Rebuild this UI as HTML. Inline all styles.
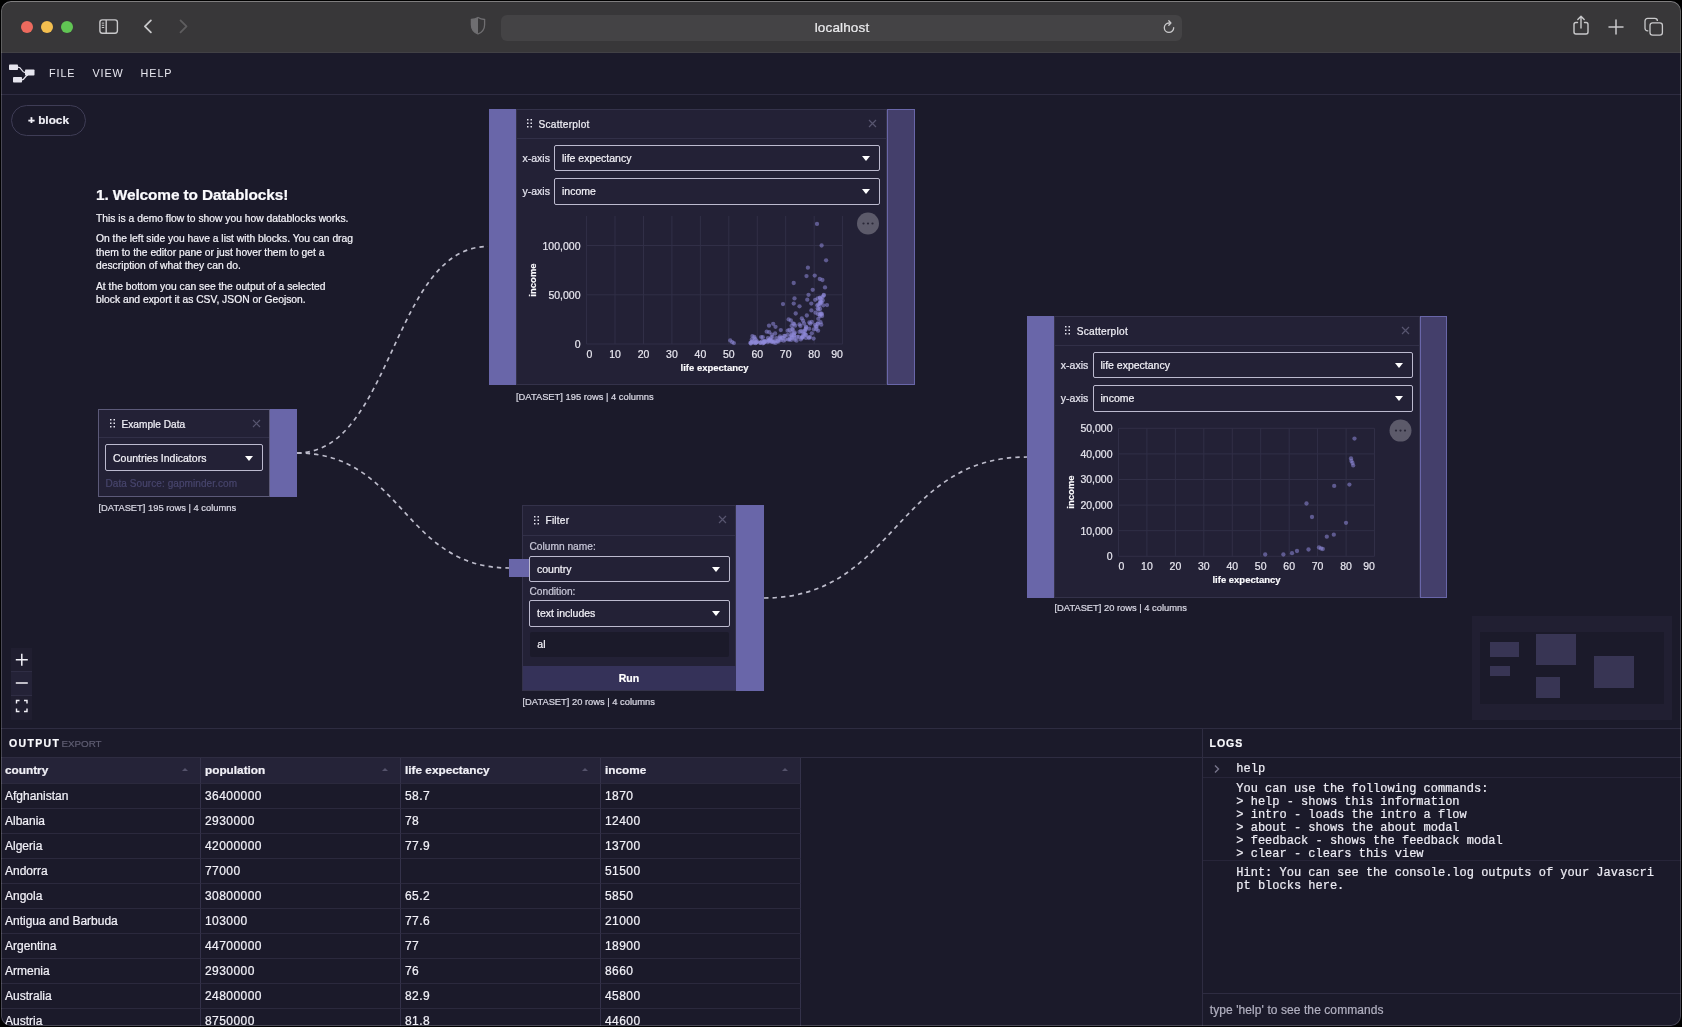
<!DOCTYPE html>
<html lang="en"><head><meta charset="utf-8"><title>Datablocks</title>
<style>
*{box-sizing:border-box;margin:0;padding:0}
html,body{width:1682px;height:1027px;overflow:hidden;background:#000}
body{font-family:"Liberation Sans",sans-serif;color:#fff;position:relative}
.win{position:absolute;left:1px;top:1px;width:1680px;height:1025px;border-radius:10px;overflow:hidden;background:#1b1a2a}
.o{position:absolute;left:-1px;top:-1px;width:1682px;height:1027px;will-change:transform}
.a{position:absolute}
.t{position:absolute;white-space:nowrap;line-height:1;-webkit-text-stroke:.22px}
.sel span,td,th,.mono{-webkit-text-stroke:.22px}
/* titlebar */
.tb{left:1px;top:1px;width:1680px;height:52px;background:#383739;border-bottom:1px solid #424145}
.url{left:501px;top:14.500px;width:680.500px;height:26px;border-radius:6px;background:#444345}
.dot{position:absolute;width:12px;height:12px;border-radius:50%;top:21px}
/* menu */
.mb{left:1px;top:53px;width:1680px;height:42px;border-bottom:1px solid #2e2c41;background:#1b1a2a}
.mi{font-size:10.8px;letter-spacing:.9px;color:#e9e8f0;top:68px}
/* nodes */
.node{position:absolute;background:#232136;border:1px solid #34324a}
.hl{position:absolute;background:#6966a9}
.hr{position:absolute;background:#443f6b;border:1px solid #6966a9}
.hd{position:absolute;left:0;right:0;top:0;height:28px;border-bottom:1px solid #323048}
.ttl{font-size:10.15px;color:#f0eff6}
.sel{position:absolute;border:1px solid #bcbacf;border-radius:2px;background:transparent;height:26px}
.sel span{position:absolute;left:7px;top:7px;font-size:10.5px;line-height:1;color:#f3f2f8;white-space:nowrap}
.sel i{position:absolute;right:9px;top:10px;width:0;height:0;border-left:4.5px solid transparent;border-right:4.5px solid transparent;border-top:5px solid #fff}
.lbl{font-size:10.5px;color:#e4e3ee}
.ds{font-size:9.35px;color:#d9d8e4}
.x{position:absolute;width:9px;height:9px}
.grip{position:absolute;width:5px;height:9px}
/* bottom */
.bp{left:1px;top:728px;width:1680px;height:298px;border-top:1px solid #2e2c41;background:#1b1a2a}
table{border-collapse:separate;border-spacing:0;position:absolute;left:1px;top:758px;font-size:12px;table-layout:fixed}
td,th{width:200px;height:25px;border-right:1px solid #34324a;border-bottom:1px solid #2b293d;text-align:left;padding:0 0 1px 4px;font-weight:normal;color:#f1f0f7;white-space:nowrap;position:relative}
td.n{letter-spacing:.45px}
th{font-weight:bold;font-size:11.8px;background:#252338;height:26px}
th i{position:absolute;right:12px;top:10px;width:0;height:0;border-left:3.5px solid transparent;border-right:3.5px solid transparent;border-bottom:3.5px solid #55536b}
.mono{font-family:"Liberation Mono",monospace;font-size:12px;line-height:13px;color:#ecebf3;white-space:pre;position:absolute}
.p{font-size:10.3px;color:#f3f2f8}
.mm{background:#383554}
.t.mi{-webkit-text-stroke:0}
svg text{stroke:#e8e7f0;stroke-width:.2px}
</style></head><body>
<div class="win"><div class="o">

<!-- TITLEBAR -->
<div class="a tb"></div>
<div class="dot" style="left:21px;background:#ed6a5e"></div>
<div class="dot" style="left:41px;background:#f4bf4f"></div>
<div class="dot" style="left:61px;background:#61c554"></div>
<svg class="a" style="left:96px;top:16px" width="26" height="22" viewBox="0 0 26 22" fill="none" stroke="#c9c9cb" stroke-width="1.4"><rect x="3.900" y="3.900" width="17.500" height="13.300" rx="2.400"/><path d="M10.200 3.900v13.300"/><path d="M5.800 7.100h2.400M5.800 9.300h2.400M5.800 11.500h2.400" stroke-width="1"/></svg>
<svg class="a" style="left:140px;top:17px" width="16" height="20" viewBox="0 0 16 20" fill="none" stroke="#c9c9cb" stroke-width="1.8" stroke-linecap="round" stroke-linejoin="round"><path d="M10.900 3.400L4.900 9.350l6 5.950"/></svg>
<svg class="a" style="left:175px;top:17px" width="16" height="20" viewBox="0 0 16 20" fill="none" stroke="#5e5d5f" stroke-width="1.8" stroke-linecap="round" stroke-linejoin="round"><path d="M5.500 3.400l6 5.950-6 5.950"/></svg>
<svg class="a" style="left:469px;top:16px" width="18" height="20" viewBox="0 0 18 20"><path d="M9 1.5c2 1.3 4.2 1.9 6.6 2v5.2c0 4.3-2.6 7.600-6.600 9.300C5 16.300 2.400 13 2.400 8.700V3.500C4.800 3.400 7 2.800 9 1.500z" fill="none" stroke="#6f6e71" stroke-width="1.3"/><path d="M9 1.500C7 2.800 4.800 3.400 2.400 3.500v5.200c0 4.300 2.600 7.600 6.600 9.300z" fill="#6f6e71"/></svg>
<div class="a url"></div>
<div class="t" style="left:742px;width:200px;text-align:center;top:20.700px;font-size:13.500px;letter-spacing:.15px;color:#ececee">localhost</div>
<svg class="a" style="left:1161px;top:19px" width="16" height="16" viewBox="0 0 16 16" fill="none" stroke="#c9c9cb" stroke-width="1.3" stroke-linecap="round"><path d="M12.700 8.700a4.700 4.700 0 1 1-4.700-4.700h1.500"/><path d="M7.800 1.700L9.900 4 7.800 6.300" stroke-linejoin="round"/></svg>
<svg class="a" style="left:1570px;top:13px" width="22" height="26" viewBox="0 0 22 26" fill="none" stroke="#c9c9cb" stroke-width="1.4" stroke-linecap="round" stroke-linejoin="round"><path d="M7.500 9.500H6a2 2 0 0 0-2 2v7.500a2 2 0 0 0 2 2h10a2 2 0 0 0 2-2v-7.500a2 2 0 0 0-2-2h-1.500"/><path d="M11 15V3.500M7.800 6.500L11 3.300l3.200 3.200"/></svg>
<svg class="a" style="left:1607px;top:18px" width="18" height="18" viewBox="0 0 18 18" stroke="#c9c9cb" stroke-width="1.5" stroke-linecap="round"><path d="M9 2v14M2 9h14"/></svg>
<svg class="a" style="left:1642px;top:15px" width="24" height="24" viewBox="0 0 24 24" fill="none" stroke="#c9c9cb" stroke-width="1.300"><rect x="3" y="3.400" width="12.400" height="12.400" rx="2.600"/><rect x="8" y="7.800" width="12.400" height="12.400" rx="2.600" fill="#383739" stroke="#383739" stroke-width="3.400"/><rect x="8" y="7.800" width="12.400" height="12.400" rx="2.600"/></svg>

<!-- MENUBAR -->
<div class="a mb"></div>
<svg class="a" style="left:8px;top:63px" width="28" height="21" viewBox="0 0 28 21"><g fill="#e6e5ee"><rect x="1" y="1.500" width="9" height="5.500" rx=".8"/><rect x="17" y="6.500" width="9.500" height="6" rx=".8"/><rect x="5" y="14" width="9" height="5.500" rx=".8"/></g><g fill="none" stroke="#e6e5ee" stroke-width="1.300"><path d="M10 4.200c4 0 3.500 5.300 7 5.300"/><path d="M14 16.800c3 0 3-4.500 6-5"/></g></svg>
<div class="t mi" style="left:49px">FILE</div>
<div class="t mi" style="left:92.500px">VIEW</div>
<div class="t mi" style="left:140.600px">HELP</div>

<!-- CANVAS -->
<div class="a" style="left:11px;top:105px;width:75px;height:31px;border:1px solid #3f3d56;border-radius:16px"></div>
<div class="t" style="left:28px;top:115px;font-size:11.800px;font-weight:bold;color:#f1f0f7">+ block</div>

<div class="t" id="h1" style="left:96px;top:187px;font-size:15.400px;letter-spacing:-.1px;font-weight:bold;color:#fbfbfe">1. Welcome to Datablocks!</div>
<div class="t p" style="left:96px;top:213.600px">This is a demo flow to show you how datablocks works.</div>
<div class="t p" style="left:96px;top:234.300px">On the left side you have a list with blocks. You can drag</div>
<div class="t p" style="left:96px;top:247.700px">them to the editor pane or just hover them to get a</div>
<div class="t p" style="left:96px;top:261.200px">description of what they can do.</div>
<div class="t p" style="left:96px;top:281.700px">At the bottom you can see the output of a selected</div>
<div class="t p" style="left:96px;top:295.200px">block and export it as CSV, JSON or Geojson.</div>

<!-- edges -->
<svg class="a" style="left:0;top:0" width="1682" height="728" fill="none" stroke="#bdbccb" stroke-width="1.700" stroke-dasharray="4.400 4.100"><path d="M297 453C392.500 453 392.500 246.500 488 246.500"/><path d="M297 453C403 453 403 568 509 568"/><path d="M764 598C895.500 598 895.500 457 1027 457"/></svg>

<!-- Example Data -->
<div class="node" style="left:98px;top:409px;width:172px;height:88px;border-color:#5c5a79"><div class="hd"></div></div>
<div class="hl" style="left:270px;top:409px;width:27px;height:88px"></div>
<svg class="grip" style="left:109.500px;top:419px" viewBox="0 0 5 9" fill="#e4e3ee"><rect x="0" y="0" width="1.500" height="1.500"/><rect x="3.500" y="0" width="1.500" height="1.500"/><rect x="0" y="3.500" width="1.500" height="1.500"/><rect x="3.500" y="3.500" width="1.500" height="1.500"/><rect x="0" y="7" width="1.500" height="1.500"/><rect x="3.500" y="7" width="1.500" height="1.500"/></svg>
<div class="t ttl" style="left:121.500px;top:419.500px">Example Data</div>
<svg class="x" style="left:251.500px;top:419px" viewBox="0 0 9 9" stroke="#57556f" stroke-width="1.200"><path d="M1 1l7 7M8 1l-7 7"/></svg>
<div class="sel" style="left:105px;top:444px;width:158px;height:27px"><span style="top:8px">Countries Indicators</span><i style="top:11px"></i></div>
<div class="t" style="left:105.500px;top:479.400px;font-size:10px;letter-spacing:.08px;color:#47456c">Data Source: gapminder.com</div>
<div class="t ds" style="left:98.500px;top:503.800px">[DATASET] 195 rows | 4 columns</div>

<!-- Scatterplot 1 -->
<div class="hl" style="left:488.500px;top:109px;width:28px;height:276px"></div>
<div class="node" style="left:516px;top:109px;width:371px;height:276px"><div class="hd" style="height:29px"></div></div>
<div class="hr" style="left:887px;top:109px;width:27.500px;height:276px"></div>
<svg class="grip" style="left:526.500px;top:119px" viewBox="0 0 5 9" fill="#e4e3ee"><rect x="0" y="0" width="1.500" height="1.500"/><rect x="3.500" y="0" width="1.500" height="1.500"/><rect x="0" y="3.500" width="1.500" height="1.500"/><rect x="3.500" y="3.500" width="1.500" height="1.500"/><rect x="0" y="7" width="1.500" height="1.500"/><rect x="3.500" y="7" width="1.500" height="1.500"/></svg>
<div class="t ttl" style="left:538.500px;top:119.500px;letter-spacing:.25px">Scatterplot</div>
<svg class="x" style="left:868px;top:119.200px" viewBox="0 0 9 9" stroke="#57556f" stroke-width="1.200"><path d="M1 1l7 7M8 1l-7 7"/></svg>
<div class="t lbl" style="left:522.500px;top:153.100px">x-axis</div>
<div class="sel" style="left:554px;top:145px;width:326px"><span>life expectancy</span><i></i></div>
<div class="t lbl" style="left:522.500px;top:186.400px">y-axis</div>
<div class="sel" style="left:554px;top:178px;width:326px;height:27px"><span>income</span><i></i></div>
<svg class="a" style="left:0;top:0" width="1682" height="728" font-family="Liberation Sans, sans-serif" font-size="10.500" fill="#e8e7f0">
<g stroke="#312f47" stroke-width="1"><path d="M586.600 216v128M615 216v128M643.500 216v128M671.900 216v128M700.400 216v128M728.800 216v128M757.300 216v128M785.700 216v128M814.200 216v128M842.600 216v128M586.600 344h256M586.600 294.800h256M586.600 245.500h256"/></g>
<g fill="#8f8bdb" fill-opacity=".55"><circle cx="817.0" cy="223.9" r="2.15"/><circle cx="821.6" cy="245.5" r="2.15"/><circle cx="826.1" cy="260.3" r="2.15"/><circle cx="807.9" cy="267.7" r="2.15"/><circle cx="806.5" cy="276.1" r="2.15"/><circle cx="814.7" cy="275.6" r="2.15"/><circle cx="819.8" cy="279.0" r="2.15"/><circle cx="822.4" cy="280.0" r="2.15"/><circle cx="793.7" cy="283.0" r="2.15"/><circle cx="825.0" cy="287.4" r="2.15"/><circle cx="812.7" cy="289.8" r="2.15"/><circle cx="808.5" cy="294.8" r="2.15"/><circle cx="807.3" cy="299.7" r="2.15"/><circle cx="811.3" cy="303.6" r="2.15"/><circle cx="793.7" cy="303.6" r="2.15"/><circle cx="827.0" cy="305.1" r="2.15"/><circle cx="752.4" cy="336.1" r="2.15"/><circle cx="766.7" cy="331.7" r="2.15"/><circle cx="773.2" cy="323.8" r="2.15"/><circle cx="775.5" cy="326.8" r="2.15"/><circle cx="788.6" cy="319.4" r="2.15"/><circle cx="790.8" cy="320.4" r="2.15"/><circle cx="795.7" cy="313.5" r="2.15"/><circle cx="730.2" cy="340.5" r="2.15"/><circle cx="732.2" cy="342.2" r="2.15"/><circle cx="733.9" cy="343.1" r="2.15"/><circle cx="813.6" cy="338.6" r="2.15"/><circle cx="809.0" cy="338.1" r="2.15"/><circle cx="818.1" cy="330.7" r="2.15"/><circle cx="820.1" cy="303.4" r="2.15"/><circle cx="823.3" cy="305.3" r="2.15"/><circle cx="820.5" cy="302.9" r="2.15"/><circle cx="818.3" cy="304.4" r="2.15"/><circle cx="821.3" cy="298.8" r="2.15"/><circle cx="817.6" cy="308.5" r="2.15"/><circle cx="817.6" cy="298.5" r="2.15"/><circle cx="821.7" cy="313.6" r="2.15"/><circle cx="823.7" cy="295.5" r="2.15"/><circle cx="821.5" cy="302.3" r="2.15"/><circle cx="818.1" cy="314.2" r="2.15"/><circle cx="820.6" cy="313.3" r="2.15"/><circle cx="818.3" cy="309.7" r="2.15"/><circle cx="817.2" cy="305.3" r="2.15"/><circle cx="820.0" cy="297.9" r="2.15"/><circle cx="820.5" cy="301.9" r="2.15"/><circle cx="820.4" cy="301.4" r="2.15"/><circle cx="820.1" cy="309.0" r="2.15"/><circle cx="823.8" cy="294.9" r="2.15"/><circle cx="822.7" cy="300.5" r="2.15"/><circle cx="756.6" cy="342.1" r="2.15"/><circle cx="791.4" cy="332.4" r="2.15"/><circle cx="756.0" cy="342.7" r="2.15"/><circle cx="815.2" cy="299.8" r="2.15"/><circle cx="768.7" cy="340.9" r="2.15"/><circle cx="787.7" cy="330.7" r="2.15"/><circle cx="819.2" cy="306.1" r="2.15"/><circle cx="757.1" cy="341.3" r="2.15"/><circle cx="785.1" cy="336.0" r="2.15"/><circle cx="792.7" cy="329.7" r="2.15"/><circle cx="769.2" cy="332.2" r="2.15"/><circle cx="762.4" cy="340.9" r="2.15"/><circle cx="819.9" cy="297.7" r="2.15"/><circle cx="776.5" cy="338.2" r="2.15"/><circle cx="779.7" cy="337.8" r="2.15"/><circle cx="789.4" cy="330.0" r="2.15"/><circle cx="751.8" cy="339.5" r="2.15"/><circle cx="767.9" cy="338.1" r="2.15"/><circle cx="792.9" cy="323.3" r="2.15"/><circle cx="804.7" cy="331.0" r="2.15"/><circle cx="754.3" cy="336.8" r="2.15"/><circle cx="755.4" cy="343.2" r="2.15"/><circle cx="806.8" cy="315.5" r="2.15"/><circle cx="783.0" cy="304.1" r="2.15"/><circle cx="771.0" cy="337.8" r="2.15"/><circle cx="774.7" cy="341.4" r="2.15"/><circle cx="771.5" cy="341.4" r="2.15"/><circle cx="788.0" cy="339.4" r="2.15"/><circle cx="811.4" cy="310.4" r="2.15"/><circle cx="781.7" cy="337.7" r="2.15"/><circle cx="760.8" cy="342.4" r="2.15"/><circle cx="805.4" cy="330.1" r="2.15"/><circle cx="817.8" cy="323.4" r="2.15"/><circle cx="750.7" cy="343.5" r="2.15"/><circle cx="777.3" cy="341.3" r="2.15"/><circle cx="800.8" cy="339.4" r="2.15"/><circle cx="805.6" cy="329.0" r="2.15"/><circle cx="806.0" cy="337.9" r="2.15"/><circle cx="799.5" cy="306.3" r="2.15"/><circle cx="802.5" cy="337.4" r="2.15"/><circle cx="816.6" cy="326.8" r="2.15"/><circle cx="797.3" cy="336.8" r="2.15"/><circle cx="769.0" cy="325.7" r="2.15"/><circle cx="791.1" cy="335.7" r="2.15"/><circle cx="796.5" cy="340.7" r="2.15"/><circle cx="772.4" cy="337.0" r="2.15"/><circle cx="767.9" cy="342.2" r="2.15"/><circle cx="794.2" cy="333.3" r="2.15"/><circle cx="806.2" cy="327.4" r="2.15"/><circle cx="770.2" cy="339.9" r="2.15"/><circle cx="754.7" cy="338.5" r="2.15"/><circle cx="805.4" cy="334.5" r="2.15"/><circle cx="769.9" cy="339.3" r="2.15"/><circle cx="813.9" cy="329.3" r="2.15"/><circle cx="764.7" cy="342.0" r="2.15"/><circle cx="820.5" cy="322.2" r="2.15"/><circle cx="787.8" cy="334.9" r="2.15"/><circle cx="794.1" cy="323.9" r="2.15"/><circle cx="775.1" cy="333.5" r="2.15"/><circle cx="750.5" cy="342.6" r="2.15"/><circle cx="809.1" cy="328.7" r="2.15"/><circle cx="773.7" cy="342.4" r="2.15"/><circle cx="753.7" cy="342.5" r="2.15"/><circle cx="811.8" cy="322.0" r="2.15"/><circle cx="751.0" cy="343.2" r="2.15"/><circle cx="798.7" cy="336.9" r="2.15"/><circle cx="822.1" cy="315.9" r="2.15"/><circle cx="785.1" cy="339.6" r="2.15"/><circle cx="764.0" cy="341.5" r="2.15"/><circle cx="760.1" cy="342.6" r="2.15"/><circle cx="794.8" cy="339.7" r="2.15"/><circle cx="802.5" cy="337.1" r="2.15"/><circle cx="763.4" cy="342.4" r="2.15"/><circle cx="805.9" cy="334.9" r="2.15"/><circle cx="815.1" cy="324.8" r="2.15"/><circle cx="803.3" cy="333.7" r="2.15"/><circle cx="800.4" cy="325.9" r="2.15"/><circle cx="802.5" cy="336.3" r="2.15"/><circle cx="763.0" cy="343.3" r="2.15"/><circle cx="780.8" cy="340.2" r="2.15"/><circle cx="809.4" cy="322.5" r="2.15"/><circle cx="773.6" cy="341.3" r="2.15"/><circle cx="818.3" cy="318.8" r="2.15"/><circle cx="815.5" cy="312.7" r="2.15"/><circle cx="765.6" cy="341.3" r="2.15"/><circle cx="771.8" cy="341.9" r="2.15"/><circle cx="816.4" cy="329.2" r="2.15"/><circle cx="761.2" cy="337.1" r="2.15"/><circle cx="775.5" cy="342.9" r="2.15"/><circle cx="815.9" cy="326.4" r="2.15"/><circle cx="794.3" cy="335.8" r="2.15"/><circle cx="780.8" cy="330.1" r="2.15"/><circle cx="802.8" cy="331.6" r="2.15"/><circle cx="794.0" cy="334.9" r="2.15"/><circle cx="791.8" cy="336.9" r="2.15"/><circle cx="821.6" cy="314.4" r="2.15"/><circle cx="762.8" cy="337.2" r="2.15"/><circle cx="821.3" cy="324.7" r="2.15"/><circle cx="768.4" cy="340.2" r="2.15"/><circle cx="810.3" cy="323.7" r="2.15"/><circle cx="756.5" cy="342.3" r="2.15"/><circle cx="789.2" cy="339.6" r="2.15"/><circle cx="771.8" cy="334.6" r="2.15"/><circle cx="765.1" cy="341.1" r="2.15"/><circle cx="792.4" cy="329.1" r="2.15"/><circle cx="791.8" cy="338.0" r="2.15"/><circle cx="768.8" cy="340.8" r="2.15"/><circle cx="795.1" cy="325.7" r="2.15"/><circle cx="811.8" cy="333.3" r="2.15"/><circle cx="803.1" cy="320.7" r="2.15"/><circle cx="777.7" cy="340.6" r="2.15"/><circle cx="780.0" cy="336.5" r="2.15"/><circle cx="771.7" cy="341.0" r="2.15"/><circle cx="752.5" cy="341.3" r="2.15"/><circle cx="783.6" cy="340.7" r="2.15"/><circle cx="799.5" cy="324.4" r="2.15"/><circle cx="805.9" cy="326.7" r="2.15"/><circle cx="810.1" cy="337.1" r="2.15"/><circle cx="799.5" cy="331.9" r="2.15"/><circle cx="751.7" cy="342.0" r="2.15"/><circle cx="794.7" cy="332.5" r="2.15"/><circle cx="784.2" cy="336.0" r="2.15"/><circle cx="822.6" cy="296.9" r="2.15"/><circle cx="801.8" cy="318.4" r="2.15"/><circle cx="763.8" cy="342.8" r="2.15"/><circle cx="780.4" cy="338.8" r="2.15"/><circle cx="804.0" cy="323.5" r="2.15"/><circle cx="791.6" cy="325.8" r="2.15"/><circle cx="754.6" cy="342.4" r="2.15"/><circle cx="819.9" cy="314.5" r="2.15"/><circle cx="804.5" cy="334.1" r="2.15"/><circle cx="794.4" cy="337.9" r="2.15"/><circle cx="819.9" cy="316.1" r="2.15"/><circle cx="801.8" cy="337.9" r="2.15"/><circle cx="791.6" cy="335.4" r="2.15"/><circle cx="763.9" cy="342.0" r="2.15"/><circle cx="760.4" cy="342.9" r="2.15"/><circle cx="778.3" cy="341.7" r="2.15"/><circle cx="789.6" cy="339.0" r="2.15"/><circle cx="791.1" cy="339.9" r="2.15"/><circle cx="817.6" cy="324.0" r="2.15"/><circle cx="808.8" cy="337.2" r="2.15"/><circle cx="801.0" cy="331.0" r="2.15"/><circle cx="755.5" cy="339.3" r="2.15"/><circle cx="782.8" cy="337.8" r="2.15"/><circle cx="794.5" cy="298.4" r="2.15"/></g>
<g text-anchor="end"><text x="580.500" y="348">0</text><text x="580.500" y="298.800">50,000</text><text x="580.500" y="249.500">100,000</text></g>
<g text-anchor="middle"><text x="589.500" y="358">0</text><text x="615" y="358">10</text><text x="643.500" y="358">20</text><text x="671.900" y="358">30</text><text x="700.400" y="358">40</text><text x="728.800" y="358">50</text><text x="757.300" y="358">60</text><text x="785.700" y="358">70</text><text x="814.200" y="358">80</text><text x="837" y="358">90</text></g>
<text x="714.600" y="371" text-anchor="middle" font-weight="bold" font-size="9.500" fill="#fff">life expectancy</text>
<text transform="translate(536,280) rotate(-90)" text-anchor="middle" font-weight="bold" font-size="9.500" fill="#fff">income</text>
<circle cx="868" cy="223.500" r="11" fill="#5c5a6a"/><circle cx="863.500" cy="223.500" r="1.100" fill="#2a2838"/><circle cx="868" cy="223.500" r="1.100" fill="#2a2838"/><circle cx="872.500" cy="223.500" r="1.100" fill="#2a2838"/>
</svg>
<div class="t ds" style="left:516px;top:392.600px">[DATASET] 195 rows | 4 columns</div>

<!-- Scatterplot 2 -->
<div class="hl" style="left:1027px;top:316px;width:27.500px;height:282px"></div>
<div class="node" style="left:1054px;top:316px;width:365.500px;height:282px"><div class="hd" style="height:29px"></div></div>
<div class="hr" style="left:1419.500px;top:316px;width:27.500px;height:282px"></div>
<svg class="grip" style="left:1065px;top:326px" viewBox="0 0 5 9" fill="#e4e3ee"><rect x="0" y="0" width="1.500" height="1.500"/><rect x="3.500" y="0" width="1.500" height="1.500"/><rect x="0" y="3.500" width="1.500" height="1.500"/><rect x="3.500" y="3.500" width="1.500" height="1.500"/><rect x="0" y="7" width="1.500" height="1.500"/><rect x="3.500" y="7" width="1.500" height="1.500"/></svg>
<div class="t ttl" style="left:1076.800px;top:326.500px;letter-spacing:.25px">Scatterplot</div>
<svg class="x" style="left:1400.500px;top:326.200px" viewBox="0 0 9 9" stroke="#57556f" stroke-width="1.200"><path d="M1 1l7 7M8 1l-7 7"/></svg>
<div class="t lbl" style="left:1060.800px;top:360.100px">x-axis</div>
<div class="sel" style="left:1092.500px;top:352.200px;width:320px"><span>life expectancy</span><i></i></div>
<div class="t lbl" style="left:1060.800px;top:393.400px">y-axis</div>
<div class="sel" style="left:1092.500px;top:385px;width:320px;height:27px"><span>income</span><i></i></div>
<svg class="a" style="left:0;top:0" width="1682" height="728" font-family="Liberation Sans, sans-serif" font-size="10.500" fill="#e8e7f0">
<g stroke="#312f47" stroke-width="1"><path d="M1118.500 428.300v128M1146.900 428.300v128M1175.400 428.300v128M1203.800 428.300v128M1232.300 428.300v128M1260.700 428.300v128M1289.200 428.300v128M1317.600 428.300v128M1346.100 428.300v128M1374.500 428.300v128M1118.500 556.300h256M1118.500 530.700h256M1118.500 505.100h256M1118.500 479.500h256M1118.500 453.900h256M1118.500 428.300h256"/></g>
<g fill="#8f8bdb" fill-opacity=".55"><circle cx="1265.2" cy="554.5" r="2.15"/><circle cx="1283.4" cy="554.5" r="2.15"/><circle cx="1292.0" cy="553.2" r="2.15"/><circle cx="1297.0" cy="551.0" r="2.15"/><circle cx="1308.5" cy="549.5" r="2.15"/><circle cx="1319.0" cy="547.5" r="2.15"/><circle cx="1321.0" cy="548.5" r="2.15"/><circle cx="1322.8" cy="549.0" r="2.15"/><circle cx="1326.8" cy="536.7" r="2.15"/><circle cx="1333.8" cy="534.7" r="2.15"/><circle cx="1346.0" cy="522.8" r="2.15"/><circle cx="1312.0" cy="517.0" r="2.15"/><circle cx="1306.5" cy="503.5" r="2.15"/><circle cx="1334.2" cy="485.9" r="2.15"/><circle cx="1349.4" cy="484.6" r="2.15"/><circle cx="1353.2" cy="465.4" r="2.15"/><circle cx="1351.4" cy="461.0" r="2.15"/><circle cx="1351.0" cy="458.4" r="2.15"/><circle cx="1354.5" cy="438.6" r="2.15"/><circle cx="1352.5" cy="463.0" r="2.15"/></g>
<g text-anchor="end"><text x="1112.500" y="560">0</text><text x="1112.500" y="534.500">10,000</text><text x="1112.500" y="509">20,000</text><text x="1112.500" y="483.300">30,000</text><text x="1112.500" y="457.700">40,000</text><text x="1112.500" y="432.100">50,000</text></g>
<g text-anchor="middle"><text x="1121.500" y="570.200">0</text><text x="1146.900" y="570.200">10</text><text x="1175.400" y="570.200">20</text><text x="1203.800" y="570.200">30</text><text x="1232.300" y="570.200">40</text><text x="1260.700" y="570.200">50</text><text x="1289.200" y="570.200">60</text><text x="1317.600" y="570.200">70</text><text x="1346.100" y="570.200">80</text><text x="1369" y="570.200">90</text></g>
<text x="1246.500" y="583.200" text-anchor="middle" font-weight="bold" font-size="9.500" fill="#fff">life expectancy</text>
<text transform="translate(1074,492) rotate(-90)" text-anchor="middle" font-weight="bold" font-size="9.500" fill="#fff">income</text>
<circle cx="1400.500" cy="430.600" r="11" fill="#5c5a6a"/><circle cx="1396" cy="430.600" r="1.100" fill="#2a2838"/><circle cx="1400.500" cy="430.600" r="1.100" fill="#2a2838"/><circle cx="1405" cy="430.600" r="1.100" fill="#2a2838"/>
</svg>
<div class="t ds" style="left:1054.500px;top:604.400px">[DATASET] 20 rows | 4 columns</div>

<!-- Filter -->
<div class="node" style="left:522px;top:505px;width:214px;height:186px"><div class="hd" style="height:29.500px"></div></div>
<div class="hl" style="left:736px;top:505px;width:28px;height:186px"></div>
<div class="hl" style="left:509px;top:558.500px;width:19.500px;height:18.500px"></div>
<svg class="grip" style="left:533.500px;top:515.500px" viewBox="0 0 5 9" fill="#e4e3ee"><rect x="0" y="0" width="1.500" height="1.500"/><rect x="3.500" y="0" width="1.500" height="1.500"/><rect x="0" y="3.500" width="1.500" height="1.500"/><rect x="3.500" y="3.500" width="1.500" height="1.500"/><rect x="0" y="7" width="1.500" height="1.500"/><rect x="3.500" y="7" width="1.500" height="1.500"/></svg>
<div class="t ttl" style="left:545.500px;top:515.700px;letter-spacing:.2px">Filter</div>
<svg class="x" style="left:718.300px;top:515.200px" viewBox="0 0 9 9" stroke="#57556f" stroke-width="1.200"><path d="M1 1l7 7M8 1l-7 7"/></svg>
<div class="t" style="left:529.500px;top:542.400px;font-size:10.200px;color:#c9c8d8">Column name:</div>
<div class="sel" style="left:529px;top:556px;width:201px"><span>country</span><i></i></div>
<div class="t" style="left:529.500px;top:587px;font-size:10.200px;color:#c9c8d8">Condition:</div>
<div class="sel" style="left:529px;top:600px;width:201px;height:27px"><span>text includes</span><i></i></div>
<div class="a" style="left:530px;top:632px;width:198.500px;height:25px;background:#1b1a2a;border-radius:2px"></div>
<div class="t" style="left:537.300px;top:638.700px;font-size:10.500px;color:#f3f2f8">al</div>
<div class="a" style="left:523px;top:666px;width:213px;height:24px;background:#353259"></div>
<div class="t" style="left:579px;width:100px;text-align:center;top:672.900px;font-size:10.500px;font-weight:bold;color:#fff">Run</div>
<div class="t ds" style="left:522.500px;top:697.600px">[DATASET] 20 rows | 4 columns</div>

<!-- zoom controls -->
<div class="a" style="left:11px;top:648px;width:21px;height:72px;background:#201e30"></div><div class="a" style="left:11px;top:672px;width:21px;height:23px;background:#242237"></div>
<div class="a" style="left:11px;top:671px;width:21px;height:1px;background:#2f2d44"></div>
<div class="a" style="left:11px;top:695px;width:21px;height:1px;background:#2f2d44"></div>
<svg class="a" style="left:11px;top:648px" width="21" height="72" viewBox="0 0 21 72" fill="none" stroke="#f2f1f8" stroke-width="1.500"><path d="M4.800 11.700h12M10.800 5.700v12M4.800 35h12"/><path d="M5.500 55.500v-3h3M13 52.500h3v3M16 60.500v3h-3M8.500 63.500h-3v-3" stroke-width="1.400"/></svg>

<!-- minimap -->
<div class="a" style="left:1472px;top:616px;width:200px;height:104px;background:#211f32"></div>
<div class="a" style="left:1479.500px;top:631.500px;width:184px;height:72px;background:#1b1a2a"></div>
<div class="a mm" style="left:1490px;top:641.500px;width:28.500px;height:15.500px"></div>
<div class="a mm" style="left:1490px;top:666px;width:20px;height:10px"></div>
<div class="a mm" style="left:1535.500px;top:634px;width:40.500px;height:30.500px"></div>
<div class="a mm" style="left:1536px;top:677px;width:24px;height:21px"></div>
<div class="a mm" style="left:1593.500px;top:656px;width:40.500px;height:32px"></div>

<!-- BOTTOM -->
<div class="a bp"></div>
<div class="t" style="left:9px;top:738px;font-size:10.500px;font-weight:bold;letter-spacing:1.350px;color:#fbfbfe">OUTPUT</div>
<div class="t" style="left:61.500px;top:738.500px;font-size:9.800px;letter-spacing:0;color:#5f5d72">EXPORT</div>
<div class="a" style="left:1px;top:757px;width:1680px;height:1px;background:#2e2c41"></div>
<table><tr><th>country<i></i></th><th>population<i></i></th><th>life expectancy<i></i></th><th>income<i></i></th></tr>
<tr><td>Afghanistan</td><td class="n">36400000</td><td class="n">58.7</td><td class="n">1870</td></tr>
<tr><td>Albania</td><td class="n">2930000</td><td class="n">78</td><td class="n">12400</td></tr>
<tr><td>Algeria</td><td class="n">42000000</td><td class="n">77.9</td><td class="n">13700</td></tr>
<tr><td>Andorra</td><td class="n">77000</td><td></td><td class="n">51500</td></tr>
<tr><td>Angola</td><td class="n">30800000</td><td class="n">65.2</td><td class="n">5850</td></tr>
<tr><td>Antigua and Barbuda</td><td class="n">103000</td><td class="n">77.6</td><td class="n">21000</td></tr>
<tr><td>Argentina</td><td class="n">44700000</td><td class="n">77</td><td class="n">18900</td></tr>
<tr><td>Armenia</td><td class="n">2930000</td><td class="n">76</td><td class="n">8660</td></tr>
<tr><td>Australia</td><td class="n">24800000</td><td class="n">82.9</td><td class="n">45800</td></tr>
<tr><td>Austria</td><td class="n">8750000</td><td class="n">81.8</td><td class="n">44600</td></tr>
</table>
<div class="a" style="left:1202px;top:728px;width:1px;height:298px;background:#2e2c41"></div>
<div class="t" style="left:1209.500px;top:738px;font-size:10.500px;font-weight:bold;letter-spacing:1px;color:#fbfbfe">LOGS</div>
<svg class="a" style="left:1213px;top:763.500px" width="8" height="10" viewBox="0 0 8 10" fill="none" stroke="#77758b" stroke-width="1.400"><path d="M2 1.500l3.500 3.500L2 8.500"/></svg>
<div class="mono" style="left:1236.300px;top:762.600px">help</div>
<div class="a" style="left:1203px;top:776.500px;width:1478px;height:1px;background:#272539"></div>
<div class="mono" style="left:1236.300px;top:782.700px">You can use the following commands:
&gt; help - shows this information
&gt; intro - loads the intro a flow
&gt; about - shows the about modal
&gt; feedback - shows the feedback modal
&gt; clear - clears this view</div>
<div class="a" style="left:1203px;top:860px;width:1478px;height:1px;background:#272539"></div>
<div class="mono" style="left:1236.300px;top:866.700px">Hint: You can see the console.log outputs of your Javascri
pt blocks here.</div>
<div class="a" style="left:1203px;top:993px;width:1478px;height:1px;background:#2e2c41"></div>
<div class="t" style="left:1209.800px;top:1004.200px;font-size:12px;letter-spacing:.08px;color:#b0afbf">type 'help' to see the commands</div>


<div class="a" style="left:1px;top:1px;width:1680px;height:1025px;border-radius:10px;box-shadow:inset 0 0 0 1px rgba(255,255,255,.2), inset 0 1px 0 0 rgba(255,255,255,.2);pointer-events:none"></div>
</div></div>
</body></html>
